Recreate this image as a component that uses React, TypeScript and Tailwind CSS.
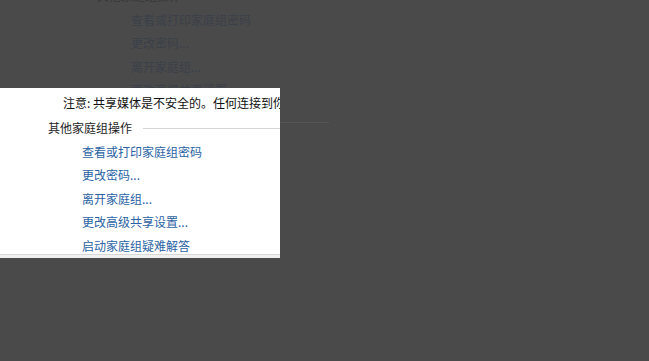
import React from "react";

const links = [
  "查看或打印家庭组密码",
  "更改密码...",
  "离开家庭组...",
  "更改高级共享设置...",
  "启动家庭组疑难解答",
];

function HomegroupPanel({ dim }: { dim?: boolean }) {
  return (
    <div className="w-[280px] h-[170px] flex flex-col overflow-hidden">
      <div
        className={
          dim
            ? "h-[166px] shrink-0 flex flex-col pt-[3px]"
            : "h-[166px] shrink-0 flex flex-col pt-[3px] bg-white"
        }
      >
        <div
          className={
            dim
              ? "h-[24px] shrink-0 flex items-center pl-[63px] whitespace-nowrap text-[#3c3c3c]"
              : "h-[24px] shrink-0 flex items-center pl-[63px] whitespace-nowrap text-[#111]"
          }
        >
          注意: 共享媒体是不安全的。任何连接到你的网络的用户都可以访问你共享的媒体。
        </div>
        <div className="h-[24px] shrink-0 mt-[1px] flex items-center pl-[48px]">
          <span className={dim ? "text-[#383838] whitespace-nowrap" : "text-[#1e1e1e] whitespace-nowrap"}>
            其他家庭组操作
          </span>
          <div className={dim ? "flex-1 ml-[11px] h-px bg-[#454545]" : "flex-1 ml-[11px] h-px bg-[#d5d5d5]"} />
        </div>
        {links.map((l) => (
          <div key={l} className="h-[23.5px] shrink-0 flex items-center pl-[82px]">
            <span className={dim ? "text-[#3b4049] whitespace-nowrap" : "text-[#2a62a4] whitespace-nowrap"}>
              {l}
            </span>
          </div>
        ))}
      </div>
      <div
        className={
          dim
            ? "h-[4px] shrink-0 border-t border-[#555555]"
            : "h-[4px] shrink-0 border-t border-[#d8d8d8] bg-[#f0f0f0]"
        }
      />
    </div>
  );
}

export default function App() {
  return (
    <div className="relative w-[649px] h-[361px] overflow-hidden bg-[#4a4a4a] text-[12px] leading-none font-['Noto_Sans_CJK_SC','Microsoft_YaHei',sans-serif]">
      <div className="ml-[49px] mt-[-44px]">
        <HomegroupPanel dim />
      </div>
      <div className="absolute left-0 top-[88px]">
        <HomegroupPanel />
      </div>
    </div>
  );
}
